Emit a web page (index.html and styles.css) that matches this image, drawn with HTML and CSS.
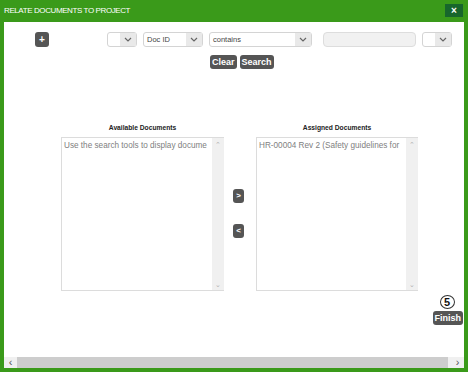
FILE: index.html
```html
<!DOCTYPE html>
<html lang="en">
<head>
    <meta charset="UTF-8">
    <title>Relate Documents to Project</title>
    <link rel="stylesheet" href="styles.css">
</head>
<body>
    <div class="dialog">
        <div class="titlebar">
            <span class="title">RELATE DOCUMENTS TO PROJECT</span>
            <button class="close">&times;</button>
        </div>
        <div class="content">
            <div class="main">
                <div class="filters">
                    <button class="btn add">+</button>
                    <div class="select s-small"><span></span><i><svg viewBox="0 0 8 5"><polyline points="1,1 4,4 7,1"/></svg></i></div>
                    <div class="select s-field"><span>Doc ID</span><i><svg viewBox="0 0 8 5"><polyline points="1,1 4,4 7,1"/></svg></i></div>
                    <div class="select s-op"><span>contains</span><i><svg viewBox="0 0 8 5"><polyline points="1,1 4,4 7,1"/></svg></i></div>
                    <div class="textbox"></div>
                    <div class="select s-small"><span></span><i><svg viewBox="0 0 8 5"><polyline points="1,1 4,4 7,1"/></svg></i></div>
                </div>
                <div class="actions">
                    <button class="btn">Clear</button>
                    <button class="btn">Search</button>
                </div>

                <div class="panels">
                    <div class="panel">
                        <div class="panel-label">Available Documents</div>
                        <div class="listbox">
                            <div class="items">Use the search tools to display docume</div>
                            <div class="vscroll"><span>&#8963;</span><span>&#8964;</span></div>
                        </div>
                    </div>
                    <div class="movers">
                        <button class="btn small">&gt;</button>
                        <button class="btn small">&lt;</button>
                    </div>
                    <div class="panel">
                        <div class="panel-label">Assigned Documents</div>
                        <div class="listbox right">
                            <div class="items">HR-00004 Rev 2 (Safety guidelines for</div>
                            <div class="vscroll"><span>&#8963;</span><span>&#8964;</span></div>
                        </div>
                    </div>
                </div>

                <div class="finish-row">
                    <div class="finish-wrap">
                        <span class="badge">5</span>
                        <button class="btn">Finish</button>
                    </div>
                </div>
            </div>
            <div class="hscroll">
                <span class="arrow">&lsaquo;</span>
                <span class="thumb"></span>
                <span class="arrow">&rsaquo;</span>
            </div>
        </div>
    </div>
</body>
</html>
```

FILE: styles.css
```css
body{
    margin: 0;
    font-family: "Liberation Sans", Arial, sans-serif;
    background-color: #3a9a1a;
}

.dialog{
    width: 468px;
    height: 372px;
    display: flex;
    flex-direction: column;
}

.titlebar{
    height: 22px;
    display: flex;
    align-items: center;
    justify-content: space-between;
    padding: 0 5px 0 4px;
}

.title{
    color: #ffffff;
    font-size: 8px;
    letter-spacing: -0.4px;
    margin-top: -1px;
}

.close{
    width: 18px;
    height: 13px;
    border: none;
    padding: 0;
    background-color: #17662c;
    color: #ffffff;
    font-size: 10px;
    font-weight: bold;
    line-height: 13px;
    margin-top: -2px;
}

.content{
    flex: 1;
    margin: 0 4px 4px 4px;
    background-color: #ffffff;
    display: flex;
    flex-direction: column;
}

.main{
    flex: 1;
}

.btn{
    background-color: #555555;
    color: #ffffff;
    border: none;
    border-radius: 3px;
    font-family: "Liberation Sans", Arial, sans-serif;
    font-size: 9px;
    font-weight: bold;
    height: 14px;
    padding: 0 2px;
    line-height: 14px;
}

.filters{
    display: flex;
    align-items: center;
    padding: 10px 0 0 31px;
}

.add{
    width: 14px;
    height: 15px;
    margin-right: 58px;
    font-size: 10px;
    padding: 0;
}

.select{
    height: 13px;
    border: 1px solid #d4d4d4;
    border-radius: 3px;
    display: flex;
    margin-right: 6px;
    font-size: 7.5px;
    color: #444444;
}

.select span{
    flex: 1;
    line-height: 13px;
    padding-left: 3px;
}

.select i{
    width: 16px;
    display: flex;
    align-items: center;
    justify-content: center;
    background-color: #e9e9e9;
}

.select svg{
    width: 8px;
    height: 5px;
    fill: none;
    stroke: #666666;
    stroke-width: 1.2;
}

.s-small{
    width: 28px;
}

.s-field{
    width: 58px;
}

.s-op{
    width: 101px;
    margin-right: 11px;
}

.textbox{
    width: 91px;
    height: 13px;
    border: 1px solid #dddddd;
    border-radius: 4px;
    background-color: #f1f1f1;
    margin-right: 6px;
}

.actions{
    display: flex;
    gap: 3px;
    padding: 8px 0 0 206px;
}

.panels{
    display: flex;
    align-items: flex-start;
    padding: 53px 0 0 57px;
}

.panel{
    display: flex;
    flex-direction: column;
}

.panel-label{
    text-align: center;
    font-size: 6.7px;
    font-weight: bold;
    color: #222222;
    height: 11px;
    line-height: 11px;
    margin-bottom: 4px;
}

.listbox{
    width: 162px;
    height: 152px;
    border: 1px solid #dcdcdc;
    border-right: none;
    display: flex;
}

.listbox.right{
    width: 161px;
}

.items{
    flex: 1;
    font-size: 8.2px;
    color: #808080;
    padding: 3px 0 0 2px;
    white-space: nowrap;
    overflow: hidden;
}

.vscroll{
    width: 12px;
    background-color: #f0f0f0;
    display: flex;
    flex-direction: column;
    justify-content: space-between;
    align-items: center;
    color: #b0b0b0;
    font-size: 7px;
    line-height: 10px;
    padding: 2px 0 0;
}

.movers{
    display: flex;
    flex-direction: column;
    gap: 21px;
    padding: 67px 0 0 9px;
    width: 23px;
}

.btn.small{
    width: 11px;
    height: 14px;
    padding: 0;
    font-size: 8px;
}

.finish-row{
    display: flex;
    justify-content: flex-end;
    padding: 16px 1px 0 0;
}

.finish-wrap{
    position: relative;
}

.finish-wrap .btn{
    height: 14px;
    padding: 0 2px;
}

.badge{
    position: absolute;
    top: -12px;
    left: 7px;
    width: 15px;
    height: 14px;
    border-radius: 50%;
    background-color: #ffffff;
    border: 1px solid #333333;
    box-sizing: border-box;
    font-size: 11px;
    font-weight: bold;
    line-height: 12px;
    text-align: center;
    color: #111111;
}

.hscroll{
    height: 11px;
    display: flex;
    background-color: #f0f0f0;
}

.hscroll .arrow{
    width: 13px;
    text-align: center;
    font-size: 11px;
    line-height: 10px;
    color: #555555;
}

.hscroll .thumb{
    flex: 1;
    background-color: #cdcdcd;
    margin-right: 3px;
}
```
